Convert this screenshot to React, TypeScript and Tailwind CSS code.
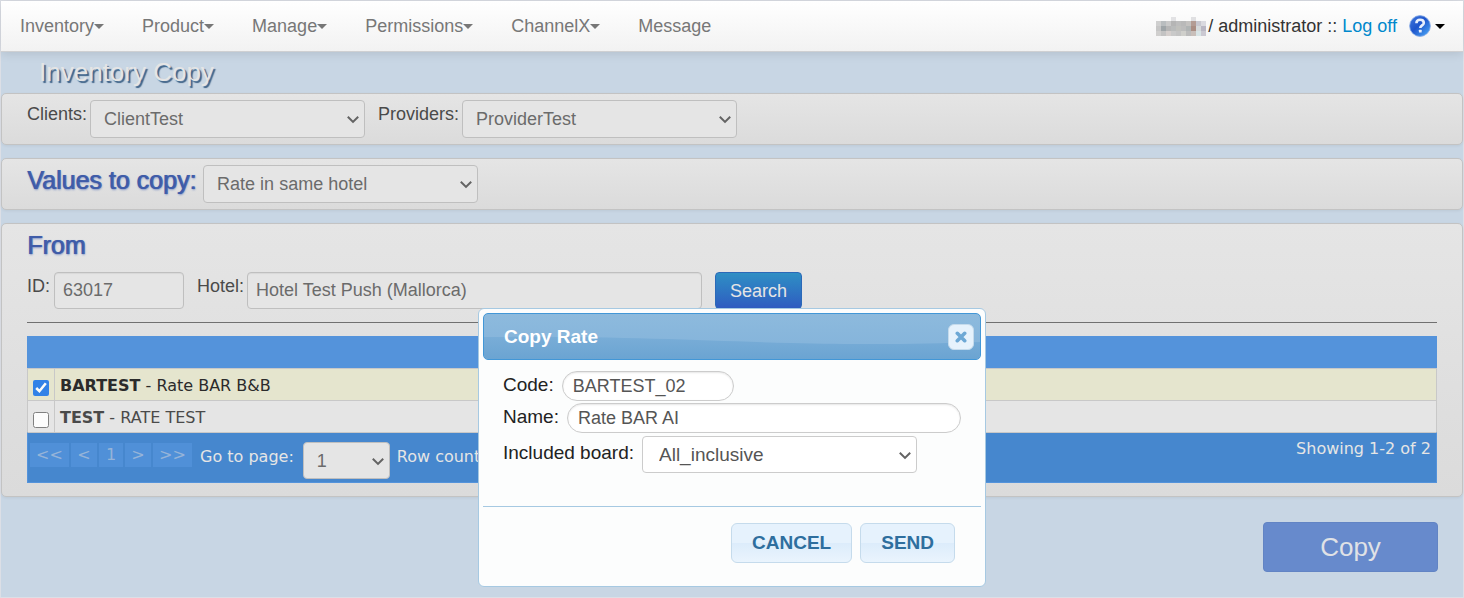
import React, { useState } from "react";
import clsx from "clsx";

const ARIAL = "font-['Liberation_Sans',Arial,sans-serif]";
const VERDANA = "font-['DejaVu_Sans',Verdana,sans-serif]";

function Caret() {
  return (
    <svg width="10" height="5" viewBox="0 0 10 5" aria-hidden="true">
      <path d="M0 0h10L5 5z" fill="currentColor" />
    </svg>
  );
}

type SelectProps = {
  id: string;
  value: string;
  width: string;
  box: string;
};

function Select({ id, value, width, box }: SelectProps) {
  return (
    <div className={clsx("relative shrink-0", width)}>
      <select
        id={id}
        defaultValue={value}
        className={clsx("block w-full appearance-none rounded border border-solid pr-8", box, ARIAL)}
      >
        <option>{value}</option>
      </select>
      <svg
        className="pointer-events-none absolute top-1/2 right-1.5 -mt-1 text-[#636363]"
        width="12"
        height="9"
        viewBox="0 0 12 9"
        fill="none"
        stroke="currentColor"
        strokeWidth="2"
        aria-hidden="true"
      >
        <path d="M0.8 1.7L6 6.9L11.2 1.7" />
      </svg>
    </div>
  );
}

const DIM_SELECT = "h-[38px] bg-[#e5e5e5] border-[#bfbfbf] text-[#6b6b6b] pl-[13px] text-lg";
const DIM_INPUT =
  "h-[37px] min-w-0 rounded border border-[#bfbfbf] bg-[#e5e5e5] px-2 text-lg text-[#6b6b6b] shadow-[inset_0_1px_1px_rgba(0,0,0,0.06)]";
const PANEL =
  "rounded-[5px] border border-[#c3c3c3] bg-linear-to-b from-[#e5e5e5] to-[#dbdbdb] px-[25px] shadow-[0_1px_3px_rgba(0,0,0,0.06)]";
const LABEL = "leading-7 text-[#4a4a4a]";
const SECTION_TITLE =
  "text-[25px] font-normal text-[#3f5ca8] [text-shadow:1px_0_0_#4a66ae,1px_1px_2px_#7f92c4]";

function HelpIcon() {
  return (
    <svg width="22" height="22" viewBox="0 0 22 22" aria-hidden="true">
      <defs>
        <linearGradient id="help" x1="0" y1="0" x2="1" y2="1">
          <stop offset="0" stopColor="#4279dc" />
          <stop offset="0.45" stopColor="#1f55cb" />
          <stop offset="1" stopColor="#4fb0fb" />
        </linearGradient>
      </defs>
      <circle cx="11" cy="11" r="10.4" fill="url(#help)" stroke="#86a9e6" strokeWidth="0.8" />
      <path
        d="M7.4 8.2C7.5 5.9 9 4.8 11.1 4.8C13.3 4.8 14.8 6 14.8 7.9C14.8 10.4 11.3 10.4 11.3 13"
        fill="none"
        stroke="#e9f0fc"
        strokeWidth="2.6"
      />
      <rect x="9.9" y="14.8" width="2.8" height="2.7" rx="0.5" fill="#e9f0fc" />
    </svg>
  );
}

const MOSAIC = [
  "#cfcfcf", "#b9bdbf", "#c9c9c9", "#b5b5b5", "#bdbdbd", "#b9b9b9", "#c4c2c0", "#b39c94", "#c7c7cf", "#dadae0",
  "#c6c6c6", "#9fa5a8", "#b6b6b6", "#b9bbbb", "#c0c0bc", "#bcbcbc", "#b0b4b4", "#aa8e84", "#d5d9da", "#b9b7c4",
  "#d0cfce", "#c3c3c3", "#d5cfcd", "#c9c9c9", "#c4c4c4", "#cfcfcb", "#bcbcbc", "#c9bfba", "#d8e4e6", "#cbc9d2",
];

function MaskedName() {
  return (
    <svg width="50" height="19" viewBox="0 0 50 19" role="img" aria-label="Hidden user">
      <rect x="15" y="0" width="5" height="4" fill="#e2e2e4" />
      <rect x="35" y="0" width="5" height="4" fill="#e0e0e2" />
      {MOSAIC.map((fill, i) => (
        <rect key={i} x={(i % 10) * 5} y={4 + Math.floor(i / 10) * 5} width="5" height="5" fill={fill} />
      ))}
    </svg>
  );
}

const NAV = [
  { name: "Inventory", menu: true },
  { name: "Product", menu: true },
  { name: "Manage", menu: true },
  { name: "Permissions", menu: true },
  { name: "ChannelX", menu: true },
  { name: "Message", menu: false },
];

function TopBar() {
  return (
    <header className="relative flex h-[51px] items-center justify-between border-b border-[#cfd0d2] bg-linear-to-b from-white to-[#f2f2f2] pr-[18px] pl-[19px] text-lg shadow-[0_1px_10px_rgba(0,0,0,0.12)]">
      <nav className="flex gap-[38px] text-[#777]">
        {NAV.map((item) => (
          <a key={item.name} href="#" className="flex items-center">
            {item.name}
            {item.menu && <Caret />}
          </a>
        ))}
      </nav>
      <div className="flex items-center text-[#333]">
        <MaskedName />
        <span className="ml-0.5 whitespace-pre">/ administrator :: </span>
        <a href="#" className="text-[#0088cc]">
          Log off
        </a>
        <button type="button" aria-label="Help" className="ml-3 flex items-center gap-1 text-black">
          <HelpIcon />
          <Caret />
        </button>
      </div>
    </header>
  );
}

const RATES = [
  { code: "BARTEST", name: "Rate BAR B&B" },
  { code: "TEST", name: "RATE TEST" },
];

const PAGES = [
  { text: "<<", width: "w-[39px]" },
  { text: "<", width: "w-[26px]" },
  { text: "1", width: "w-6" },
  { text: ">", width: "w-[26px]" },
  { text: ">>", width: "w-[39px]" },
];

function RatesTable() {
  const [picked, setPicked] = useState("BARTEST");
  return (
    <div className={clsx("mt-[13px] text-base", VERDANA)}>
      <table className="w-full border-separate border-spacing-0">
        <thead>
          <tr className="h-8 bg-[#5493db]">
            <th colSpan={2} aria-label="Rates" />
          </tr>
        </thead>
        <tbody>
          {RATES.map((rate) => {
            const on = rate.code === picked;
            return (
              <tr
                key={rate.code}
                className={clsx("h-8", on ? "bg-[#e5e5ce] text-[#2b2b2b]" : "bg-[#e5e5e5] text-[#4a4a4a]")}
              >
                <td className="w-7 border-t border-r border-l border-[#c8c8c8] p-0 pt-[7px] pr-px">
                  <input
                    type="checkbox"
                    id={rate.code}
                    checked={on}
                    onChange={() => setPicked(on ? "" : rate.code)}
                    className="mx-auto block size-4 opacity-90 accent-[#1f78ea]"
                  />
                </td>
                <td className="border-t border-r border-[#c8c8c8] p-0 pt-0.5 pl-[5px]">
                  <label htmlFor={rate.code}>
                    <b>{rate.code}</b> - {rate.name}
                  </label>
                </td>
              </tr>
            );
          })}
        </tbody>
      </table>
      <div className="flex h-[51px] items-start justify-between border border-t-[#c8c8c8] border-[#5493db] bg-[#4687ce] pr-[5px] pl-0.5 text-[#e5e5e5]">
        <div className="flex items-start">
          <div className="mt-2.5 flex gap-0.5 text-[#96b4d8]">
            {PAGES.map((page) => (
              <button key={page.text} type="button" className={clsx("h-6 bg-[#5090d8]", page.width)}>
                {page.text}
              </button>
            ))}
          </div>
          <label htmlFor="page" className="mr-[9px] ml-2 leading-[48px]">
            Go to page:
          </label>
          <div className="mt-[9px]">
            <Select
              id="page"
              value="1"
              width="w-[87px]"
              box="h-[37px] bg-[#e5e5e5] border-[#bfbfbf] text-[#6b6b6b] pl-[13px] text-lg"
            />
          </div>
          <span className="ml-[7px] leading-[48px]">Row count:</span>
        </div>
        <span className="leading-8">Showing 1-2 of 2</span>
      </div>
    </div>
  );
}

const DIALOG_INPUT =
  "h-[30px] rounded-full border border-[#ccc] bg-white px-2.5 text-lg text-[#555] shadow-[inset_0_1px_2px_rgba(0,0,0,0.1)]";
const DIALOG_BUTTON =
  "h-10 rounded-md border border-[#c5dbec] bg-[linear-gradient(#e6f2fd,#e6f2fd_50%,#dcecfb_50%,#eaf4fd)] px-5 font-bold text-[#2e6e9e]";

function CopyRateDialog() {
  return (
    <div
      role="dialog"
      aria-labelledby="dialog-title"
      className="absolute top-[307px] left-1/2 w-[508px] -translate-x-1/2 rounded-md border border-[#a6c9e2] bg-[#fcfdfd] p-1 text-[19px] text-[#222]"
    >
      <div className="relative flex h-[47px] items-center justify-between overflow-hidden rounded-[5px] border border-[#4297d7] bg-linear-to-b from-[#8dbadd] to-[#82b2da] pr-1.5 pl-5">
        <svg
          className="absolute inset-0 size-full"
          viewBox="0 0 500 45"
          preserveAspectRatio="none"
          aria-hidden="true"
        >
          <defs>
            <linearGradient id="wave" x1="0" y1="0" x2="0" y2="1">
              <stop offset="0" stopColor="#79add7" />
              <stop offset="1" stopColor="#6ba4d2" />
            </linearGradient>
          </defs>
          <path d="M0 23C140 22 220 27 310 29C390 31 440 30 500 28V45H0Z" fill="url(#wave)" />
        </svg>
        <h2 id="dialog-title" className="relative font-bold text-white">
          Copy Rate
        </h2>
        <button
          type="button"
          aria-label="Close"
          className="relative flex size-[26px] items-center justify-center rounded-md border border-[#c5dbec] bg-[#e6f2fc]"
        >
          <svg width="12" height="12" viewBox="0 0 12 12" aria-hidden="true">
            <path d="M2.3 2.3L9.7 9.7M9.7 2.3L2.3 9.7" stroke="#6da8d5" strokeWidth="3.6" strokeLinecap="round" />
          </svg>
        </button>
      </div>
      <form className="flex flex-col gap-0.5 px-5 pt-[11px] pb-[33px]">
        <div className="flex gap-2">
          <label htmlFor="code" className="leading-7">
            Code:
          </label>
          <input id="code" defaultValue="BARTEST_02" className={clsx(DIALOG_INPUT, "w-[172px]")} />
        </div>
        <div className="flex gap-2">
          <label htmlFor="name" className="leading-7">
            Name:
          </label>
          <input id="name" defaultValue="Rate BAR AI" className={clsx(DIALOG_INPUT, "min-w-0 flex-1")} />
        </div>
        <div className="flex gap-2 pt-px">
          <label htmlFor="board" className="leading-[34px]">
            Included board:
          </label>
          <Select
            id="board"
            value="All_inclusive"
            width="w-[275px]"
            box="h-[37px] bg-white border-[#ccc] text-[#555] pl-4 text-[19px]"
          />
        </div>
      </form>
      <div className="flex justify-end gap-2 border-t border-[#a6c9e2] pt-4 pr-[26px] pb-[19px]">
        <button type="button" className={DIALOG_BUTTON}>
          CANCEL
        </button>
        <button type="button" className={DIALOG_BUTTON}>
          SEND
        </button>
      </div>
    </div>
  );
}

export default function App() {
  return (
    <div
      className={clsx(
        "relative min-h-screen border border-[#dcdfe6] bg-[#c8d6e4] text-lg text-[#4a4a4a]",
        ARIAL
      )}
    >
      <TopBar />
      <main>
        <h1 className="pl-[38px] text-[26px] leading-[41px] text-[#e5e5e5] [text-shadow:2px_2px_1px_#3f6388]">
          Inventory Copy
        </h1>
        <section className={clsx(PANEL, "flex gap-[13px] py-1.5")}>
          <div className="flex gap-[3px]">
            <label htmlFor="clients" className={LABEL}>
              Clients:
            </label>
            <Select id="clients" value="ClientTest" width="w-[275px]" box={DIM_SELECT} />
          </div>
          <div className="flex gap-[3px]">
            <label htmlFor="providers" className={LABEL}>
              Providers:
            </label>
            <Select id="providers" value="ProviderTest" width="w-[275px]" box={DIM_SELECT} />
          </div>
        </section>
        <section className={clsx(PANEL, "mt-[13px] flex gap-[7px] py-1.5")}>
          <label htmlFor="values" className={clsx(SECTION_TITLE, "leading-[30px]")}>
            Values to copy:
          </label>
          <Select id="values" value="Rate in same hotel" width="w-[275px]" box={DIM_SELECT} />
        </section>
        <section className={clsx(PANEL, "mt-[13px] pb-[13px]")}>
          <h2 className={clsx(SECTION_TITLE, "leading-[42px]")}>From</h2>
          <form className="mt-1.5 flex gap-[13px] border-b border-[#707070] pb-[13px]">
            <div className="flex gap-1">
              <label htmlFor="hotel-id" className={LABEL}>
                ID:
              </label>
              <input id="hotel-id" defaultValue="63017" className={clsx(DIM_INPUT, "w-[130px]")} />
            </div>
            <div className="flex gap-[3px]">
              <label htmlFor="hotel" className={LABEL}>
                Hotel:
              </label>
              <input
                id="hotel"
                defaultValue="Hotel Test Push (Mallorca)"
                className={clsx(DIM_INPUT, "w-[455px]")}
              />
            </div>
            <button
              type="button"
              className="h-[37px] rounded border border-[#2b69b8] bg-linear-to-b from-[#2f8fc4] to-[#2f5bc0] px-3.5 text-[#e5e5e5]"
            >
              Search
            </button>
          </form>
          <RatesTable />
        </section>
        <div className="flex justify-end pt-[25px] pr-[25px] pb-6">
          <button
            type="button"
            className="h-[50px] w-[175px] rounded border border-[#6284c4] bg-[#678acc] text-[26px] text-[#e0e2e6]"
          >
            Copy
          </button>
        </div>
      </main>
      <CopyRateDialog />
    </div>
  );
}
